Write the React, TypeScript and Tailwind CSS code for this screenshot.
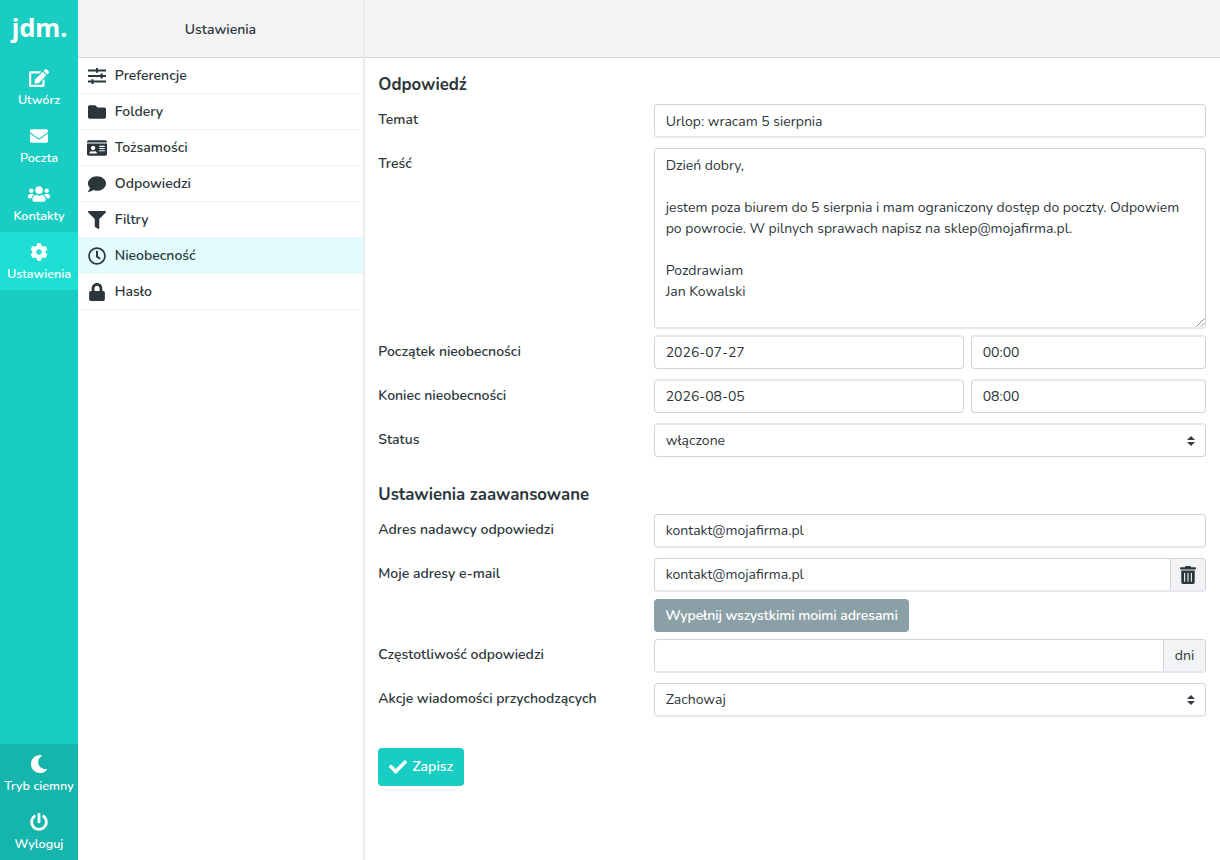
import React from "react";
import { FaEdit, FaEnvelope, FaUsers, FaCog, FaMoon, FaPowerOff, FaFolder, FaIdCard, FaComment, FaFilter, FaRegClock, FaLock, FaCheck, FaTrashAlt } from "react-icons/fa";

function Nav({ icon, label, active }: { icon: React.ReactNode; label: string; active?: boolean }) {
  return (
    <div className={`flex h-[58px] flex-col items-center pt-[10px] text-white ${active ? "bg-[#1fded3]" : ""}`}>
      <div className="flex h-[19px] items-center justify-center text-[18px]">{icon}</div>
      <span className="mt-[4px] whitespace-nowrap text-[12.6px] font-[560] leading-[17px]">{label}</span>
    </div>
  );
}

function Item({ icon, label, active }: { icon: React.ReactNode; label: string; active?: boolean }) {
  return (
    <div className={`flex h-9 items-center border-b border-[#f1f3f4] pl-[9px] ${active ? "bg-[#e3fdff]" : ""}`}>
      <div className="flex w-5 items-center justify-center text-[18px]">{icon}</div>
      <span className="ml-[7.800px] whitespace-nowrap font-semibold">{label}</span>
    </div>
  );
}

function Row({ label, h, pad = "pt-[5px]", children }: { label: string; h: string; pad?: string; children: React.ReactNode }) {
  return (
    <div className={`flex items-start ${h}`}>
      <div className={`w-[276px] shrink-0 whitespace-nowrap pl-[0.300px] font-semibold leading-[21px] ${pad}`}>{label}</div>
      <div className="flex w-[552px] gap-[7px]">{children}</div>
    </div>
  );
}

const base = "flex h-[34px] items-center rounded-[4px] border border-[#ced4da] bg-white pl-[10.700px]";
const box = `${base} border-b-2 border-b-[#e6e8ed]`;
const boxTop = `${base} border-t-2 border-t-[#e6e8ed]`;

function Sort() {
  return (
    <svg className="ml-auto mr-[10.500px]" width="8" height="10" viewBox="0 0 8 10" fill="#343a40">
      <path d="M4 0L8 4H0zM4 10L0 6H8z" />
    </svg>
  );
}

function Sliders() {
  return (
    <svg width="18" height="16" viewBox="0 0 18 16" fill="currentColor">
      <path d="M0 1.500H8V0H10V1.500H18V3.400H10V4.800H8V3.400H0zM0 7H12.500V5.500H14.800V7H18V9H14.800V10.500H12.500V9H0zM0 12.600H3.500V11.200H5.500V12.600H18V14.500H5.500V16H3.500V14.500H0z" />
    </svg>
  );
}

export default function App() {
  return (
    <div className="flex h-[860px] w-[1220px] overflow-hidden bg-white font-['Nunito','Lato',sans-serif] text-[14px] text-[#2c363a]">
      <nav className="flex w-[78px] shrink-0 flex-col bg-[#19cdc3]">
        <div className="flex h-[58px] justify-center pl-px pt-[10px] font-['Noto_Sans',sans-serif] text-[25.500px] font-bold leading-[35px] text-white">jdm.</div>
        <Nav icon={<FaEdit className="text-[20px]" />} label="Utwórz" />
        <Nav icon={<FaEnvelope />} label="Poczta" />
        <Nav icon={<FaUsers className="text-[22px]" />} label="Kontakty" />
        <Nav icon={<FaCog />} label="Ustawienia" active />
        <div className="mt-auto bg-[#15b5ac]">
          <Nav icon={<FaMoon />} label="Tryb ciemny" />
          <Nav icon={<FaPowerOff />} label="Wyloguj" />
        </div>
      </nav>
      <aside className="w-[287px] shrink-0 border-r-2 border-[#e9ecef]">
        <div className="flex h-[58px] items-center justify-center border-b border-[#ced4da] bg-[#f3f3f3] pt-px font-semibold">Ustawienia</div>
        <Item icon={<Sliders />} label="Preferencje" />
        <Item icon={<FaFolder />} label="Foldery" />
        <Item icon={<FaIdCard className="shrink-0 text-[20px]" />} label="Tożsamości" />
        <Item icon={<FaComment />} label="Odpowiedzi" />
        <Item icon={<FaFilter />} label="Filtry" />
        <Item icon={<FaRegClock />} label="Nieobecność" active />
        <Item icon={<FaLock />} label="Hasło" />
      </aside>
      <main className="w-[855px]">
        <div className="h-[58px] border-b border-[#ced4da] bg-[#f3f3f3]" />
        <div className="pl-[13px]">
          <h2 className="h-[46px] pl-[0.300px] pt-[14px] text-[16.800px] font-bold leading-[25px]">Odpowiedź</h2>
          <Row label="Temat" h="h-[44px]"><div className={`${box} w-full pt-px`}>Urlop: wracam 5 sierpnia</div></Row>
          <Row label="Treść" h="h-[187px]">
            <div className="flex h-[181px] w-full items-end rounded-[4px] border border-b-2 border-[#ced4da] border-b-[#e6e8ed]">
              <div className="self-start whitespace-pre pl-[10.700px] pt-[6px] leading-[21px]">
                {"Dzień dobry,\n\njestem poza biurem do 5 sierpnia i mam ograniczony dostęp do poczty. Odpowiem\npo powrocie. W pilnych sprawach napisz na sklep@mojafirma.pl.\n\nPozdrawiam\nJan Kowalski"}
              </div>
              <svg className="ml-auto shrink-0" width="9" height="9" viewBox="0 0 9 9" stroke="#8a8a8a" strokeWidth="1"><path d="M0.500 8.500L8.500 0.500M5 8.500L8.500 5" /></svg>
            </div>
          </Row>
          <Row label="Początek nieobecności" h="h-[44px]" pad="pt-[6px]"><div className={`${boxTop} w-[310px]`}>2026-07-27</div><div className={`${boxTop} w-[235px]`}>00:00</div></Row>
          <Row label="Koniec nieobecności" h="h-[44px]" pad="pt-[6px]"><div className={`${boxTop} w-[310px]`}>2026-08-05</div><div className={`${boxTop} w-[235px]`}>08:00</div></Row>
          <Row label="Status" h="h-[45px]" pad="pt-[6px]"><div className={`${boxTop} w-full`}>włączone<Sort /></div></Row>
          <h2 className="h-[46px] pl-[0.300px] pt-[14px] text-[16.800px] font-bold leading-[25px]">Ustawienia zaawansowane</h2>
          <Row label="Adres nadawcy odpowiedzi" h="h-[44px]"><div className={`${box} w-full`}>kontakt@mojafirma.pl</div></Row>
          <Row label="Moje adresy e-mail" h="h-[81px]">
            <div className="w-full">
              <div className={`${box} w-full overflow-hidden`}>kontakt@mojafirma.pl<span className="ml-auto flex h-full w-[35px] items-center justify-center border-l border-[#ced4da] bg-[#f1f3f5] pt-px"><FaTrashAlt className="text-[18px]" /></span></div>
              <div className="mt-[7px] flex h-[33px] w-[255px] items-center justify-center rounded-[4px] bg-[#8b9fa7] font-semibold tracking-[-0.100px] text-white">Wypełnij wszystkimi moimi adresami</div>
            </div>
          </Row>
          <Row label="Częstotliwość odpowiedzi" h="h-[44px]"><div className={`${box} w-full overflow-hidden`}><span className="ml-auto flex h-full w-[42px] items-center justify-center border-l border-[#ced4da] bg-[#f1f3f5]">dni</span></div></Row>
          <Row label="Akcje wiadomości przychodzących" h="h-[44px]"><div className={`${box} w-full`}>Zachowaj<Sort /></div></Row>
          <div className="ml-[0.400px] mt-[21px] flex h-[38px] w-[86px] items-center rounded-[4px] bg-[#19cdc3] pl-[11px] font-semibold text-white"><FaCheck className="text-[18px]" /><span className="mb-px ml-[5px]">Zapisz</span></div>
        </div>
      </main>
    </div>
  );
}
